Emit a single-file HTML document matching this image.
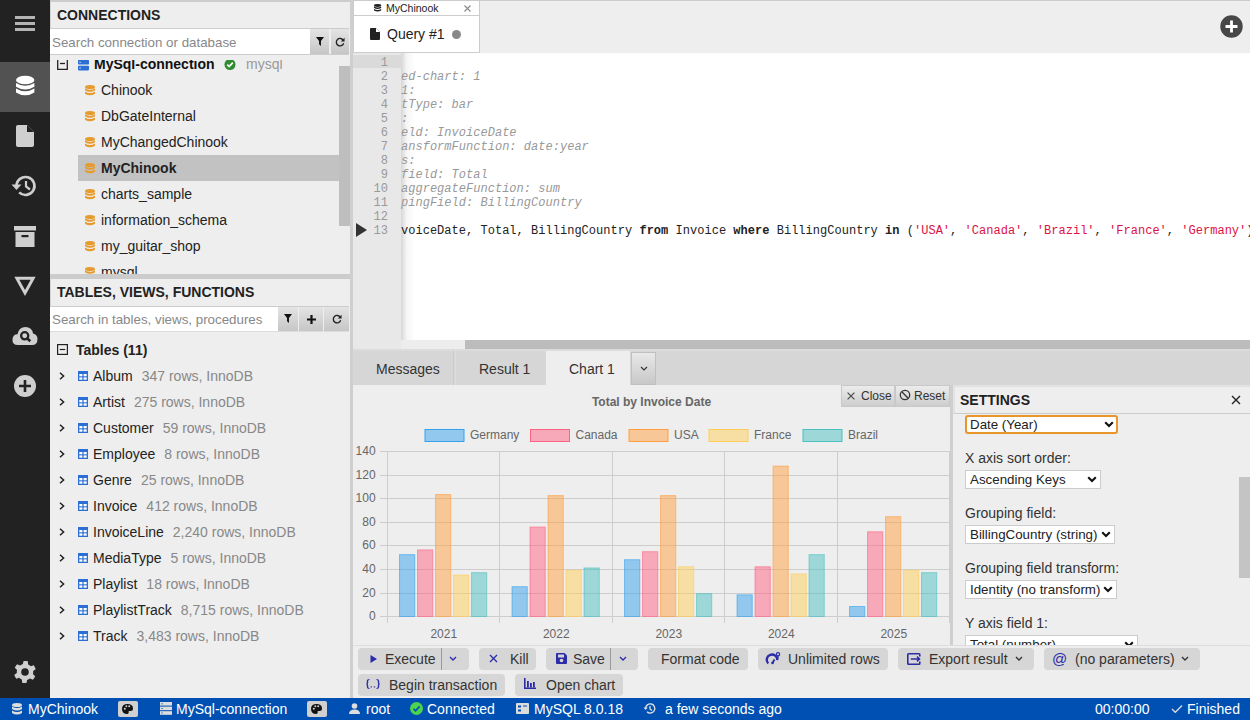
<!DOCTYPE html><html><head><meta charset="utf-8"><style>
*{box-sizing:border-box;margin:0;padding:0}
html,body{width:1250px;height:720px;overflow:hidden;background:#eee;font-family:"Liberation Sans",sans-serif;font-size:14px;color:#222}
.a{position:absolute}
.t{position:absolute;white-space:nowrap;line-height:1}
svg{position:absolute;overflow:visible}
.row{position:absolute;height:26px;line-height:26px;white-space:nowrap;color:#222}
.sub{color:#888;margin-left:9px}
.btn{position:absolute;background:linear-gradient(#e4e4e4,#c6c6c6);}
.tb{position:absolute;height:21px;background:#d6d6d6;border-radius:4px;white-space:nowrap;color:#333}
.tb span{position:absolute;top:3px;line-height:16px}
.lbl{position:absolute;left:12px;font-size:14px;color:#333;line-height:16px;white-space:nowrap}
.sel{position:absolute;left:12px;height:19px;background:#fff;border:1px solid #ccc;font-size:13.333px;color:#222;line-height:17px;padding-left:4px;white-space:nowrap}
.st{position:absolute;top:0;line-height:23px;white-space:nowrap;color:#fff}
.ln{position:absolute;left:0;width:34px;text-align:right;font-family:"Liberation Mono",monospace;font-size:12px;color:#999;height:14px;line-height:14px}
.code{position:absolute;left:48px;font-family:"Liberation Mono",monospace;font-size:12px;letter-spacing:0.023px;height:14px;line-height:14px;white-space:pre;color:#999;font-style:italic}
</style></head><body>
<div class="a" style="left:0;top:0;width:50px;height:698px;background:#222"></div>
<div class="a" style="left:15px;top:16px;width:20px;height:3px;background:#b4b4b4"></div>
<div class="a" style="left:15px;top:22px;width:20px;height:3px;background:#b4b4b4"></div>
<div class="a" style="left:15px;top:28px;width:20px;height:3px;background:#b4b4b4"></div>
<div class="a" style="left:0;top:62px;width:50px;height:50px;background:#525252"></div>
<svg style="left:16px;top:75px" width="18.4" height="21" viewBox="0 0 18.4 21">
<ellipse cx="9.2" cy="5" rx="9.2" ry="4.3" fill="#fff"/>
<path d="M0 7.9 Q9.2 13.5 18.4 7.9 V11.8 Q9.2 17.4 0 11.8Z" fill="#fff"/>
<path d="M0 13.5 Q9.2 19.1 18.4 13.5 V17.4 Q9.2 23.2 0 17.4Z" fill="#fff"/>
</svg>
<svg style="left:16px;top:125px" width="18" height="22" viewBox="0 0 18 22">
<path d="M2 0 H11 L18 7 V20 Q18 22 16 22 H2 Q0 22 0 20 V2 Q0 0 2 0Z" fill="#cfcfcf"/>
<path d="M11 0 L18 7 H11Z" fill="#222"/>
</svg>
<svg style="left:11px;top:175px" width="26" height="22" viewBox="0 0 26 22">
<path d="M5.5 11 A9 9 0 1 1 8.2 17.4" fill="none" stroke="#cfcfcf" stroke-width="2.6"/>
<path d="M0.5 9.5 L5.5 15 L10.5 9.5Z" fill="#cfcfcf"/>
<path d="M15 6 V11.5 L19 14.5" fill="none" stroke="#cfcfcf" stroke-width="2.2"/>
</svg>
<svg style="left:14px;top:226px" width="22" height="21" viewBox="0 0 22 21">
<rect x="0" y="0" width="22" height="4.5" fill="#cfcfcf"/>
<rect x="1.5" y="6" width="19" height="15" fill="#cfcfcf"/>
<rect x="7.5" y="9" width="7" height="2.2" fill="#222"/>
</svg>
<svg style="left:15px;top:277px" width="20" height="18" viewBox="0 0 20 18">
<path d="M1.8 1.3 H18.2 L10 16Z" fill="none" stroke="#cfcfcf" stroke-width="2.9" stroke-linejoin="miter"/>
</svg>
<svg style="left:12px;top:326px" width="26" height="19" viewBox="0 0 26 19">
<path d="M6 19 Q0 19 0.5 13 Q1 8.5 5.5 8.3 Q7 1 13.5 1 Q20 1 21 7.5 Q25.5 8.5 25.5 13 Q25.5 19 20 19Z" fill="#cfcfcf"/>
<circle cx="12.7" cy="9.8" r="3.6" fill="none" stroke="#222" stroke-width="2.3"/>
<path d="M15.3 12.4 L18.3 15.3" stroke="#222" stroke-width="2.6"/>
</svg>
<svg style="left:14px;top:375px" width="22" height="22" viewBox="0 0 22 22">
<circle cx="11" cy="11" r="11" fill="#cfcfcf"/>
<path d="M11 5 V17 M5 11 H17" stroke="#222" stroke-width="2.6"/>
</svg>
<svg style="left:14px;top:661px" width="22" height="22" viewBox="0 0 22 22">
<path d="M11.00 0.00 L12.44 0.09 L13.85 0.37 L14.14 3.42 L15.10 3.90 L15.99 4.49 L16.80 5.20 L19.73 4.30 L20.53 5.50 L21.16 6.79 L21.63 8.15 L19.13 9.93 L19.20 11.00 L19.13 12.07 L18.92 13.12 L21.16 15.21 L20.53 16.50 L19.73 17.70 L18.78 18.78 L15.99 17.51 L15.10 18.10 L14.14 18.58 L13.12 18.92 L12.44 21.91 L11.00 22.00 L9.56 21.91 L8.15 21.63 L7.86 18.58 L6.90 18.10 L6.01 17.51 L5.20 16.80 L2.27 17.70 L1.47 16.50 L0.84 15.21 L0.37 13.85 L2.87 12.07 L2.80 11.00 L2.87 9.93 L3.08 8.88 L0.84 6.79 L1.47 5.50 L2.27 4.30 L3.22 3.22 L6.01 4.49 L6.90 3.90 L7.86 3.42 L8.88 3.08 L9.56 0.09Z" fill="#cfcfcf"/>
<circle cx="11" cy="11" r="3.8" fill="#222"/>
</svg>
<div class="a" style="left:50px;top:0;width:300px;height:698px;background:#eee"></div>
<div class="a" style="left:50px;top:0;width:300px;height:2px;background:#ccc"></div>
<div class="a" style="left:50px;top:2px;width:299px;height:27px;background:#eee;border-left:1px solid #d4d4d4;border-bottom:1px solid #ccc"></div>
<div class="t" style="left:57px;top:8px;font-weight:bold;font-size:14px;color:#222">CONNECTIONS</div>
<div class="a" style="left:50px;top:29px;width:260px;height:25px;background:#fff"></div>
<div class="t" style="left:52px;top:36px;font-size:13.333px;color:#888">Search connection or database</div>
<div class="btn" style="left:310px;top:29px;width:19px;height:25px"></div>
<div class="btn" style="left:331px;top:29px;width:18px;height:25px"></div>
<svg style="left:316px;top:37px" width="8" height="9" viewBox="0 0 10 11"><path d="M0 0 H10 L6.2 5 V11 L3.8 9 V5Z" fill="#111"/></svg>
<svg style="left:335px;top:37px" width="10" height="10" viewBox="0 0 12 12"><path d="M10 4 A4.5 4.5 0 1 0 10.4 7.5" fill="none" stroke="#222" stroke-width="1.6"/><path d="M11.5 1 V5.5 H7Z" fill="#222"/></svg>
<div class="a" style="left:50px;top:54px;width:299px;height:1px;background:#ccc"></div>
<svg style="left:57px;top:60px" width="11" height="10" viewBox="0 0 11 10"><path d="M0.7 0 V9.3 H10.3 V0" fill="none" stroke="#222" stroke-width="1.3"/><path d="M3 3.5 H8" stroke="#222" stroke-width="1.3"/></svg>
<svg style="left:78px;top:60px" width="11" height="11" viewBox="0 0 11 11"><rect x="0" y="0" width="11" height="4.6" rx="0.8" fill="#2b6fd6"/><rect x="0" y="5.8" width="11" height="4.6" rx="0.8" fill="#2b6fd6"/><rect x="1.5" y="1.8" width="1.2" height="1" fill="#fff"/><rect x="1.5" y="7.6" width="1.2" height="1" fill="#fff"/></svg>
<div class="row" style="left:94px;top:51px;font-weight:bold;color:#111">MySql-connection</div>
<svg style="left:224px;top:59px" width="12" height="11" viewBox="0 0 12 11"><circle cx="6" cy="5.5" r="5.5" fill="#2e8b2e"/><path d="M3.2 5.6 L5.2 7.5 L8.8 3.6" fill="none" stroke="#fff" stroke-width="1.7"/></svg>
<div class="row" style="left:246px;top:51px;color:#999">mysql</div>
<div class="a" style="left:50px;top:55px;width:289px;height:5px;background:#eee"></div>
<div class="a" style="left:78px;top:155px;width:262px;height:26px;background:#c2c2c2"></div>
<svg style="left:85px;top:85px" width="10" height="11" viewBox="0 0 10 11"><ellipse cx="5" cy="2" rx="5" ry="2" fill="#e69b2e"/><path d="M0 3.2 Q5 6.2 10 3.2 V5.3 Q5 8.3 0 5.3Z" fill="#e69b2e"/><path d="M0 6.5 Q5 9.5 10 6.5 V8.8 Q5 11.8 0 8.8Z" fill="#e69b2e"/></svg>
<div class="row" style="left:101px;top:77px;">Chinook</div>
<svg style="left:85px;top:111px" width="10" height="11" viewBox="0 0 10 11"><ellipse cx="5" cy="2" rx="5" ry="2" fill="#e69b2e"/><path d="M0 3.2 Q5 6.2 10 3.2 V5.3 Q5 8.3 0 5.3Z" fill="#e69b2e"/><path d="M0 6.5 Q5 9.5 10 6.5 V8.8 Q5 11.8 0 8.8Z" fill="#e69b2e"/></svg>
<div class="row" style="left:101px;top:103px;">DbGateInternal</div>
<svg style="left:85px;top:137px" width="10" height="11" viewBox="0 0 10 11"><ellipse cx="5" cy="2" rx="5" ry="2" fill="#e69b2e"/><path d="M0 3.2 Q5 6.2 10 3.2 V5.3 Q5 8.3 0 5.3Z" fill="#e69b2e"/><path d="M0 6.5 Q5 9.5 10 6.5 V8.8 Q5 11.8 0 8.8Z" fill="#e69b2e"/></svg>
<div class="row" style="left:101px;top:129px;">MyChangedChinook</div>
<svg style="left:85px;top:163px" width="10" height="11" viewBox="0 0 10 11"><ellipse cx="5" cy="2" rx="5" ry="2" fill="#e69b2e"/><path d="M0 3.2 Q5 6.2 10 3.2 V5.3 Q5 8.3 0 5.3Z" fill="#e69b2e"/><path d="M0 6.5 Q5 9.5 10 6.5 V8.8 Q5 11.8 0 8.8Z" fill="#e69b2e"/></svg>
<div class="row" style="left:101px;top:155px;font-weight:bold;">MyChinook</div>
<svg style="left:85px;top:189px" width="10" height="11" viewBox="0 0 10 11"><ellipse cx="5" cy="2" rx="5" ry="2" fill="#e69b2e"/><path d="M0 3.2 Q5 6.2 10 3.2 V5.3 Q5 8.3 0 5.3Z" fill="#e69b2e"/><path d="M0 6.5 Q5 9.5 10 6.5 V8.8 Q5 11.8 0 8.8Z" fill="#e69b2e"/></svg>
<div class="row" style="left:101px;top:181px;">charts_sample</div>
<svg style="left:85px;top:215px" width="10" height="11" viewBox="0 0 10 11"><ellipse cx="5" cy="2" rx="5" ry="2" fill="#e69b2e"/><path d="M0 3.2 Q5 6.2 10 3.2 V5.3 Q5 8.3 0 5.3Z" fill="#e69b2e"/><path d="M0 6.5 Q5 9.5 10 6.5 V8.8 Q5 11.8 0 8.8Z" fill="#e69b2e"/></svg>
<div class="row" style="left:101px;top:207px;">information_schema</div>
<svg style="left:85px;top:241px" width="10" height="11" viewBox="0 0 10 11"><ellipse cx="5" cy="2" rx="5" ry="2" fill="#e69b2e"/><path d="M0 3.2 Q5 6.2 10 3.2 V5.3 Q5 8.3 0 5.3Z" fill="#e69b2e"/><path d="M0 6.5 Q5 9.5 10 6.5 V8.8 Q5 11.8 0 8.8Z" fill="#e69b2e"/></svg>
<div class="row" style="left:101px;top:233px;">my_guitar_shop</div>
<svg style="left:85px;top:267px" width="10" height="11" viewBox="0 0 10 11"><ellipse cx="5" cy="2" rx="5" ry="2" fill="#e69b2e"/><path d="M0 3.2 Q5 6.2 10 3.2 V5.3 Q5 8.3 0 5.3Z" fill="#e69b2e"/><path d="M0 6.5 Q5 9.5 10 6.5 V8.8 Q5 11.8 0 8.8Z" fill="#e69b2e"/></svg>
<div class="row" style="left:101px;top:259px;">mysql</div>
<div class="a" style="left:50px;top:274px;width:300px;height:5px;background:#ccc"></div>
<div class="a" style="left:339px;top:66px;width:11px;height:160px;background:#bebebe"></div>
<div class="a" style="left:50px;top:279px;width:299px;height:28px;background:#eee;border-left:1px solid #d4d4d4;border-bottom:1px solid #ccc"></div>
<div class="t" style="left:57px;top:285px;font-weight:bold;font-size:14px;color:#222">TABLES, VIEWS, FUNCTIONS</div>
<div class="a" style="left:50px;top:307px;width:228px;height:24px;background:#fff"></div>
<div class="t" style="left:52px;top:313px;font-size:13.333px;color:#888">Search in tables, views, procedures</div>
<div class="btn" style="left:278px;top:307px;width:20px;height:24px"></div>
<div class="btn" style="left:299px;top:307px;width:24px;height:24px"></div>
<div class="btn" style="left:324px;top:307px;width:25px;height:24px"></div>
<svg style="left:284px;top:314px" width="8" height="9" viewBox="0 0 10 11"><path d="M0 0 H10 L6.2 5 V11 L3.8 9 V5Z" fill="#111"/></svg>
<svg style="left:307px;top:315px" width="9" height="9" viewBox="0 0 9 9"><path d="M4.5 0 V9 M0 4.5 H9" stroke="#111" stroke-width="2.2"/></svg>
<svg style="left:332px;top:314px" width="10" height="10" viewBox="0 0 12 12"><path d="M10 4 A4.5 4.5 0 1 0 10.4 7.5" fill="none" stroke="#222" stroke-width="1.6"/><path d="M11.5 1 V5.5 H7Z" fill="#222"/></svg>
<div class="a" style="left:50px;top:331px;width:299px;height:1px;background:#ddd"></div>
<svg style="left:57px;top:344px" width="11" height="11" viewBox="0 0 11 11"><rect x="0.6" y="0.6" width="9.8" height="9.8" fill="none" stroke="#222" stroke-width="1.2"/><path d="M2.8 5.5 H8.2" stroke="#222" stroke-width="1.2"/></svg>
<div class="row" style="left:76px;top:337px;font-weight:bold">Tables (11)</div>
<svg style="left:59px;top:372px" width="6" height="8" viewBox="0 0 6 8"><path d="M1 0.8 L4.6 4 L1 7.2" fill="none" stroke="#222" stroke-width="1.5"/></svg>
<svg style="left:78px;top:371px" width="10" height="10" viewBox="0 0 10 10"><rect x="0" y="0" width="10" height="10" fill="#2b6fd6"/><rect x="1.3" y="3" width="3.1" height="2.3" fill="#fff"/><rect x="5.6" y="3" width="3.1" height="2.3" fill="#fff"/><rect x="1.3" y="6.4" width="3.1" height="2.3" fill="#fff"/><rect x="5.6" y="6.4" width="3.1" height="2.3" fill="#fff"/></svg>
<div class="row" style="left:93px;top:363px">Album<span class="sub">347 rows, InnoDB</span></div>
<svg style="left:59px;top:398px" width="6" height="8" viewBox="0 0 6 8"><path d="M1 0.8 L4.6 4 L1 7.2" fill="none" stroke="#222" stroke-width="1.5"/></svg>
<svg style="left:78px;top:397px" width="10" height="10" viewBox="0 0 10 10"><rect x="0" y="0" width="10" height="10" fill="#2b6fd6"/><rect x="1.3" y="3" width="3.1" height="2.3" fill="#fff"/><rect x="5.6" y="3" width="3.1" height="2.3" fill="#fff"/><rect x="1.3" y="6.4" width="3.1" height="2.3" fill="#fff"/><rect x="5.6" y="6.4" width="3.1" height="2.3" fill="#fff"/></svg>
<div class="row" style="left:93px;top:389px">Artist<span class="sub">275 rows, InnoDB</span></div>
<svg style="left:59px;top:424px" width="6" height="8" viewBox="0 0 6 8"><path d="M1 0.8 L4.6 4 L1 7.2" fill="none" stroke="#222" stroke-width="1.5"/></svg>
<svg style="left:78px;top:423px" width="10" height="10" viewBox="0 0 10 10"><rect x="0" y="0" width="10" height="10" fill="#2b6fd6"/><rect x="1.3" y="3" width="3.1" height="2.3" fill="#fff"/><rect x="5.6" y="3" width="3.1" height="2.3" fill="#fff"/><rect x="1.3" y="6.4" width="3.1" height="2.3" fill="#fff"/><rect x="5.6" y="6.4" width="3.1" height="2.3" fill="#fff"/></svg>
<div class="row" style="left:93px;top:415px">Customer<span class="sub">59 rows, InnoDB</span></div>
<svg style="left:59px;top:450px" width="6" height="8" viewBox="0 0 6 8"><path d="M1 0.8 L4.6 4 L1 7.2" fill="none" stroke="#222" stroke-width="1.5"/></svg>
<svg style="left:78px;top:449px" width="10" height="10" viewBox="0 0 10 10"><rect x="0" y="0" width="10" height="10" fill="#2b6fd6"/><rect x="1.3" y="3" width="3.1" height="2.3" fill="#fff"/><rect x="5.6" y="3" width="3.1" height="2.3" fill="#fff"/><rect x="1.3" y="6.4" width="3.1" height="2.3" fill="#fff"/><rect x="5.6" y="6.4" width="3.1" height="2.3" fill="#fff"/></svg>
<div class="row" style="left:93px;top:441px">Employee<span class="sub">8 rows, InnoDB</span></div>
<svg style="left:59px;top:476px" width="6" height="8" viewBox="0 0 6 8"><path d="M1 0.8 L4.6 4 L1 7.2" fill="none" stroke="#222" stroke-width="1.5"/></svg>
<svg style="left:78px;top:475px" width="10" height="10" viewBox="0 0 10 10"><rect x="0" y="0" width="10" height="10" fill="#2b6fd6"/><rect x="1.3" y="3" width="3.1" height="2.3" fill="#fff"/><rect x="5.6" y="3" width="3.1" height="2.3" fill="#fff"/><rect x="1.3" y="6.4" width="3.1" height="2.3" fill="#fff"/><rect x="5.6" y="6.4" width="3.1" height="2.3" fill="#fff"/></svg>
<div class="row" style="left:93px;top:467px">Genre<span class="sub">25 rows, InnoDB</span></div>
<svg style="left:59px;top:502px" width="6" height="8" viewBox="0 0 6 8"><path d="M1 0.8 L4.6 4 L1 7.2" fill="none" stroke="#222" stroke-width="1.5"/></svg>
<svg style="left:78px;top:501px" width="10" height="10" viewBox="0 0 10 10"><rect x="0" y="0" width="10" height="10" fill="#2b6fd6"/><rect x="1.3" y="3" width="3.1" height="2.3" fill="#fff"/><rect x="5.6" y="3" width="3.1" height="2.3" fill="#fff"/><rect x="1.3" y="6.4" width="3.1" height="2.3" fill="#fff"/><rect x="5.6" y="6.4" width="3.1" height="2.3" fill="#fff"/></svg>
<div class="row" style="left:93px;top:493px">Invoice<span class="sub">412 rows, InnoDB</span></div>
<svg style="left:59px;top:528px" width="6" height="8" viewBox="0 0 6 8"><path d="M1 0.8 L4.6 4 L1 7.2" fill="none" stroke="#222" stroke-width="1.5"/></svg>
<svg style="left:78px;top:527px" width="10" height="10" viewBox="0 0 10 10"><rect x="0" y="0" width="10" height="10" fill="#2b6fd6"/><rect x="1.3" y="3" width="3.1" height="2.3" fill="#fff"/><rect x="5.6" y="3" width="3.1" height="2.3" fill="#fff"/><rect x="1.3" y="6.4" width="3.1" height="2.3" fill="#fff"/><rect x="5.6" y="6.4" width="3.1" height="2.3" fill="#fff"/></svg>
<div class="row" style="left:93px;top:519px">InvoiceLine<span class="sub">2,240 rows, InnoDB</span></div>
<svg style="left:59px;top:554px" width="6" height="8" viewBox="0 0 6 8"><path d="M1 0.8 L4.6 4 L1 7.2" fill="none" stroke="#222" stroke-width="1.5"/></svg>
<svg style="left:78px;top:553px" width="10" height="10" viewBox="0 0 10 10"><rect x="0" y="0" width="10" height="10" fill="#2b6fd6"/><rect x="1.3" y="3" width="3.1" height="2.3" fill="#fff"/><rect x="5.6" y="3" width="3.1" height="2.3" fill="#fff"/><rect x="1.3" y="6.4" width="3.1" height="2.3" fill="#fff"/><rect x="5.6" y="6.4" width="3.1" height="2.3" fill="#fff"/></svg>
<div class="row" style="left:93px;top:545px">MediaType<span class="sub">5 rows, InnoDB</span></div>
<svg style="left:59px;top:580px" width="6" height="8" viewBox="0 0 6 8"><path d="M1 0.8 L4.6 4 L1 7.2" fill="none" stroke="#222" stroke-width="1.5"/></svg>
<svg style="left:78px;top:579px" width="10" height="10" viewBox="0 0 10 10"><rect x="0" y="0" width="10" height="10" fill="#2b6fd6"/><rect x="1.3" y="3" width="3.1" height="2.3" fill="#fff"/><rect x="5.6" y="3" width="3.1" height="2.3" fill="#fff"/><rect x="1.3" y="6.4" width="3.1" height="2.3" fill="#fff"/><rect x="5.6" y="6.4" width="3.1" height="2.3" fill="#fff"/></svg>
<div class="row" style="left:93px;top:571px">Playlist<span class="sub">18 rows, InnoDB</span></div>
<svg style="left:59px;top:606px" width="6" height="8" viewBox="0 0 6 8"><path d="M1 0.8 L4.6 4 L1 7.2" fill="none" stroke="#222" stroke-width="1.5"/></svg>
<svg style="left:78px;top:605px" width="10" height="10" viewBox="0 0 10 10"><rect x="0" y="0" width="10" height="10" fill="#2b6fd6"/><rect x="1.3" y="3" width="3.1" height="2.3" fill="#fff"/><rect x="5.6" y="3" width="3.1" height="2.3" fill="#fff"/><rect x="1.3" y="6.4" width="3.1" height="2.3" fill="#fff"/><rect x="5.6" y="6.4" width="3.1" height="2.3" fill="#fff"/></svg>
<div class="row" style="left:93px;top:597px">PlaylistTrack<span class="sub">8,715 rows, InnoDB</span></div>
<svg style="left:59px;top:632px" width="6" height="8" viewBox="0 0 6 8"><path d="M1 0.8 L4.6 4 L1 7.2" fill="none" stroke="#222" stroke-width="1.5"/></svg>
<svg style="left:78px;top:631px" width="10" height="10" viewBox="0 0 10 10"><rect x="0" y="0" width="10" height="10" fill="#2b6fd6"/><rect x="1.3" y="3" width="3.1" height="2.3" fill="#fff"/><rect x="5.6" y="3" width="3.1" height="2.3" fill="#fff"/><rect x="1.3" y="6.4" width="3.1" height="2.3" fill="#fff"/><rect x="5.6" y="6.4" width="3.1" height="2.3" fill="#fff"/></svg>
<div class="row" style="left:93px;top:623px">Track<span class="sub">3,483 rows, InnoDB</span></div>
<div class="a" style="left:350px;top:0;width:3px;height:698px;background:#cfcfcf"></div>
<div class="a" style="left:353px;top:0;width:897px;height:53px;background:#eee"></div>
<div class="a" style="left:353px;top:0;width:897px;height:1px;background:#ccc"></div>
<div class="a" style="left:353px;top:1px;width:127px;height:52px;background:#fff;border-left:1px solid #ccc;border-right:1px solid #ccc;border-bottom:1px solid #ccc"></div>
<div class="a" style="left:353px;top:15px;width:127px;height:1px;background:#ccc"></div>
<svg style="left:373.6px;top:4px" width="7.2" height="8" viewBox="0 0 8 10" preserveAspectRatio="none"><ellipse cx="4" cy="1.8" rx="4" ry="1.8" fill="#222"/><path d="M0 3 Q4 5.6 8 3 V5 Q4 7.6 0 5Z" fill="#222"/><path d="M0 6.2 Q4 8.8 8 6.2 V8.2 Q4 10.8 0 8.2Z" fill="#222"/></svg>
<div class="t" style="left:386px;top:3px;font-size:10.5px;color:#222">MyChinook</div>
<svg style="left:464px;top:5px" width="7" height="7" viewBox="0 0 7 7"><path d="M0.5 0.5 L6.5 6.5 M6.5 0.5 L0.5 6.5" stroke="#888" stroke-width="1.1"/></svg>
<svg style="left:370px;top:28px" width="10" height="12" viewBox="0 0 10 12"><path d="M1 0 H6 L10 4 V11 Q10 12 9 12 H1 Q0 12 0 11 V1 Q0 0 1 0Z" fill="#222"/><path d="M6 0 V4 H10" fill="#fff"/></svg>
<div class="t" style="left:387px;top:27px;font-size:14px;color:#222">Query #1</div>
<div class="a" style="left:452px;top:30px;width:9px;height:9px;border-radius:50%;background:#888"></div>
<svg style="left:1220px;top:15px" width="23" height="23" viewBox="0 0 23 23"><circle cx="11.5" cy="11.5" r="11.2" fill="#474747"/><path d="M11.5 5.5 V17.5 M5.5 11.5 H17.5" stroke="#fff" stroke-width="2.8"/></svg>
<div class="a" style="left:353px;top:53px;width:897px;height:297px;background:#fff"></div>
<div class="a" style="left:353px;top:53px;width:48px;height:296px;background:#e8e8e8"></div>
<div class="a" style="left:353px;top:55px;width:48px;height:13px;background:#dadada"></div>
<div class="a" style="left:401px;top:53px;width:14px;height:287px;background:linear-gradient(90deg,rgba(0,0,0,0.16),rgba(0,0,0,0.04) 40%,rgba(0,0,0,0))"></div>
<div class="ln" style="left:354px;top:56px">1</div>
<div class="ln" style="left:354px;top:70px">2</div>
<div class="ln" style="left:354px;top:84px">3</div>
<div class="ln" style="left:354px;top:98px">4</div>
<div class="ln" style="left:354px;top:112px">5</div>
<div class="ln" style="left:354px;top:126px">6</div>
<div class="ln" style="left:354px;top:140px">7</div>
<div class="ln" style="left:354px;top:154px">8</div>
<div class="ln" style="left:354px;top:168px">9</div>
<div class="ln" style="left:354px;top:182px">10</div>
<div class="ln" style="left:354px;top:196px">11</div>
<div class="ln" style="left:354px;top:210px">12</div>
<div class="ln" style="left:354px;top:224px">13</div>
<div class="code" style="left:401px;top:70px">ed-chart: 1</div>
<div class="code" style="left:401px;top:84px">1:</div>
<div class="code" style="left:401px;top:98px">tType: bar</div>
<div class="code" style="left:401px;top:112px">:</div>
<div class="code" style="left:401px;top:126px">eld: InvoiceDate</div>
<div class="code" style="left:401px;top:140px">ansformFunction: date:year</div>
<div class="code" style="left:401px;top:154px">s:</div>
<div class="code" style="left:401px;top:168px">field: Total</div>
<div class="code" style="left:401px;top:182px">aggregateFunction: sum</div>
<div class="code" style="left:401px;top:196px">pingField: BillingCountry</div>
<div class="code" style="left:401px;top:224px;color:#222;font-style:normal">voiceDate, Total, BillingCountry <b>from</b> Invoice <b>where</b> BillingCountry <b>in</b> (<span style="color:#d14">'USA'</span>, <span style="color:#d14">'Canada'</span>, <span style="color:#d14">'Brazil'</span>, <span style="color:#d14">'France'</span>, <span style="color:#d14">'Germany'</span>)</div>
<svg style="left:356px;top:223px" width="11" height="14" viewBox="0 0 11 14"><path d="M0 0 L11 7 L0 14Z" fill="#333"/></svg>
<div class="a" style="left:401px;top:340px;width:849px;height:9px;background:#ededed"></div>
<div class="a" style="left:465px;top:340px;width:785px;height:9px;background:#bcbcbc"></div>
<div class="a" style="left:353px;top:349px;width:897px;height:2px;background:#dcdcdc"></div>
<div class="a" style="left:353px;top:351px;width:897px;height:34px;background:#d6d6d6"></div>
<div class="a" style="left:453px;top:351px;width:1px;height:34px;background:#cbcbcb"></div><div class="a" style="left:455px;top:351px;width:1px;height:34px;background:#dedede"></div>
<div class="a" style="left:546px;top:351px;width:84px;height:34px;background:#eee"></div>
<div class="t" style="left:376px;top:362px;font-size:14px;color:#333">Messages</div>
<div class="t" style="left:479px;top:362px;font-size:14px;color:#333">Result 1</div>
<div class="t" style="left:569px;top:362px;font-size:14px;color:#333">Chart 1</div>
<div class="a" style="left:631px;top:352px;width:25px;height:33px;background:linear-gradient(#e8e8e8,#c8c8c8);border:1px solid #c0c0c0"></div>
<svg style="left:640px;top:366px" width="8" height="5" viewBox="0 0 8 5"><path d="M1 1 L4 4 L7 1" fill="none" stroke="#333" stroke-width="1.1"/></svg>
<div class="a" style="left:353px;top:385px;width:597px;height:260px;background:#eee"></div>
<div class="btn" style="left:841px;top:385px;width:54px;height:22px;background:linear-gradient(#ececec,#cdcdcd);border:1px solid #c8c8c8"></div>
<div class="btn" style="left:895px;top:385px;width:55px;height:22px;background:linear-gradient(#ececec,#cdcdcd);border:1px solid #c8c8c8"></div>
<svg style="left:847px;top:392px" width="8" height="8" viewBox="0 0 8 8"><path d="M0.6 0.6 L7.4 7.4 M7.4 0.6 L0.6 7.4" stroke="#444" stroke-width="1.1"/></svg>
<div class="t" style="left:861px;top:390px;font-size:12px;color:#333">Close</div>
<svg style="left:899px;top:389px" width="12" height="12" viewBox="0 0 12 12"><circle cx="6" cy="6" r="4.7" fill="none" stroke="#333" stroke-width="1.3"/><path d="M2.8 2.8 L9.2 9.2" stroke="#333" stroke-width="1.3"/></svg>
<div class="t" style="left:914px;top:390px;font-size:12px;color:#333">Reset</div>
<svg style="left:353px;top:385px" width="597" height="260" viewBox="353 385 597 260"><text x="651.5" y="406" font-family="Liberation Sans" font-size="12" font-weight="bold" fill="#666" text-anchor="middle">Total by Invoice Date</text><rect x="425" y="429.5" width="39" height="12" fill="rgba(54,162,235,0.5)" stroke="rgb(54,162,235)" stroke-width="1"/><text x="470" y="439" font-family="Liberation Sans" font-size="12" fill="#666">Germany</text><rect x="530.5" y="429.5" width="39" height="12" fill="rgba(255,99,132,0.5)" stroke="rgb(255,99,132)" stroke-width="1"/><text x="575.5" y="439" font-family="Liberation Sans" font-size="12" fill="#666">Canada</text><rect x="629" y="429.5" width="39" height="12" fill="rgba(255,159,64,0.5)" stroke="rgb(255,159,64)" stroke-width="1"/><text x="674" y="439" font-family="Liberation Sans" font-size="12" fill="#666">USA</text><rect x="709" y="429.5" width="39" height="12" fill="rgba(255,205,86,0.5)" stroke="rgb(255,205,86)" stroke-width="1"/><text x="754" y="439" font-family="Liberation Sans" font-size="12" fill="#666">France</text><rect x="803" y="429.5" width="39" height="12" fill="rgba(75,192,192,0.5)" stroke="rgb(75,192,192)" stroke-width="1"/><text x="848" y="439" font-family="Liberation Sans" font-size="12" fill="#666">Brazil</text><line x1="380" y1="616.5" x2="950" y2="616.5" stroke="#cdcdcd" stroke-width="1"/><text x="375.6" y="620.0" font-family="Liberation Sans" font-size="12" fill="#666" text-anchor="end">0</text><line x1="380" y1="593.5" x2="950" y2="593.5" stroke="#cdcdcd" stroke-width="1"/><text x="375.6" y="597.0" font-family="Liberation Sans" font-size="12" fill="#666" text-anchor="end">20</text><line x1="380" y1="569.5" x2="950" y2="569.5" stroke="#cdcdcd" stroke-width="1"/><text x="375.6" y="573.0" font-family="Liberation Sans" font-size="12" fill="#666" text-anchor="end">40</text><line x1="380" y1="545.5" x2="950" y2="545.5" stroke="#cdcdcd" stroke-width="1"/><text x="375.6" y="549.0" font-family="Liberation Sans" font-size="12" fill="#666" text-anchor="end">60</text><line x1="380" y1="522.5" x2="950" y2="522.5" stroke="#cdcdcd" stroke-width="1"/><text x="375.6" y="526.0" font-family="Liberation Sans" font-size="12" fill="#666" text-anchor="end">80</text><line x1="380" y1="498.5" x2="950" y2="498.5" stroke="#cdcdcd" stroke-width="1"/><text x="375.6" y="502.0" font-family="Liberation Sans" font-size="12" fill="#666" text-anchor="end">100</text><line x1="380" y1="475.5" x2="950" y2="475.5" stroke="#cdcdcd" stroke-width="1"/><text x="375.6" y="479.0" font-family="Liberation Sans" font-size="12" fill="#666" text-anchor="end">120</text><line x1="380" y1="451.5" x2="950" y2="451.5" stroke="#cdcdcd" stroke-width="1"/><text x="375.6" y="455.0" font-family="Liberation Sans" font-size="12" fill="#666" text-anchor="end">140</text><line x1="387.5" y1="451" x2="387.5" y2="623" stroke="#cdcdcd" stroke-width="1"/><line x1="499.5" y1="451" x2="499.5" y2="623" stroke="#cdcdcd" stroke-width="1"/><line x1="612.5" y1="451" x2="612.5" y2="623" stroke="#cdcdcd" stroke-width="1"/><line x1="724.5" y1="451" x2="724.5" y2="623" stroke="#cdcdcd" stroke-width="1"/><line x1="837.5" y1="451" x2="837.5" y2="623" stroke="#cdcdcd" stroke-width="1"/><line x1="949.5" y1="451" x2="949.5" y2="623" stroke="#cdcdcd" stroke-width="1"/><text x="443.75" y="638" font-family="Liberation Sans" font-size="12" fill="#666" text-anchor="middle">2021</text><rect x="399.55" y="554.65" width="15.2" height="61.85" fill="rgba(54,162,235,0.5)" stroke="rgba(54,162,235,0.6)" stroke-width="1"/><rect x="417.55" y="549.94" width="15.2" height="66.56" fill="rgba(255,99,132,0.5)" stroke="rgba(255,99,132,0.6)" stroke-width="1"/><rect x="435.55" y="494.55" width="15.2" height="121.95" fill="rgba(255,159,64,0.5)" stroke="rgba(255,159,64,0.6)" stroke-width="1"/><rect x="453.55" y="575.04" width="15.2" height="41.46" fill="rgba(255,205,86,0.5)" stroke="rgba(255,205,86,0.6)" stroke-width="1"/><rect x="471.55" y="572.69" width="15.2" height="43.81" fill="rgba(75,192,192,0.5)" stroke="rgba(75,192,192,0.6)" stroke-width="1"/><text x="556.25" y="638" font-family="Liberation Sans" font-size="12" fill="#666" text-anchor="middle">2022</text><rect x="512.05" y="586.71" width="15.2" height="29.79" fill="rgba(54,162,235,0.5)" stroke="rgba(54,162,235,0.6)" stroke-width="1"/><rect x="530.05" y="527.08" width="15.2" height="89.42" fill="rgba(255,99,132,0.5)" stroke="rgba(255,99,132,0.6)" stroke-width="1"/><rect x="548.05" y="495.61" width="15.2" height="120.89" fill="rgba(255,159,64,0.5)" stroke="rgba(255,159,64,0.6)" stroke-width="1"/><rect x="566.05" y="570.33" width="15.2" height="46.17" fill="rgba(255,205,86,0.5)" stroke="rgba(255,205,86,0.6)" stroke-width="1"/><rect x="584.05" y="567.97" width="15.2" height="48.53" fill="rgba(75,192,192,0.5)" stroke="rgba(75,192,192,0.6)" stroke-width="1"/><text x="668.75" y="638" font-family="Liberation Sans" font-size="12" fill="#666" text-anchor="middle">2023</text><rect x="624.55" y="559.72" width="15.2" height="56.78" fill="rgba(54,162,235,0.5)" stroke="rgba(54,162,235,0.6)" stroke-width="1"/><rect x="642.55" y="551.71" width="15.2" height="64.79" fill="rgba(255,99,132,0.5)" stroke="rgba(255,99,132,0.6)" stroke-width="1"/><rect x="660.55" y="495.61" width="15.2" height="120.89" fill="rgba(255,159,64,0.5)" stroke="rgba(255,159,64,0.6)" stroke-width="1"/><rect x="678.55" y="566.79" width="15.2" height="49.71" fill="rgba(255,205,86,0.5)" stroke="rgba(255,205,86,0.6)" stroke-width="1"/><rect x="696.55" y="593.66" width="15.2" height="22.84" fill="rgba(75,192,192,0.5)" stroke="rgba(75,192,192,0.6)" stroke-width="1"/><text x="781.25" y="638" font-family="Liberation Sans" font-size="12" fill="#666" text-anchor="middle">2024</text><rect x="737.05" y="594.84" width="15.2" height="21.66" fill="rgba(54,162,235,0.5)" stroke="rgba(54,162,235,0.6)" stroke-width="1"/><rect x="755.05" y="566.79" width="15.2" height="49.71" fill="rgba(255,99,132,0.5)" stroke="rgba(255,99,132,0.6)" stroke-width="1"/><rect x="773.05" y="466.14" width="15.2" height="150.36" fill="rgba(255,159,64,0.5)" stroke="rgba(255,159,64,0.6)" stroke-width="1"/><rect x="791.05" y="573.98" width="15.2" height="42.52" fill="rgba(255,205,86,0.5)" stroke="rgba(255,205,86,0.6)" stroke-width="1"/><rect x="809.05" y="554.65" width="15.2" height="61.85" fill="rgba(75,192,192,0.5)" stroke="rgba(75,192,192,0.6)" stroke-width="1"/><text x="893.75" y="638" font-family="Liberation Sans" font-size="12" fill="#666" text-anchor="middle">2025</text><rect x="849.55" y="606.51" width="15.2" height="9.99" fill="rgba(54,162,235,0.5)" stroke="rgba(54,162,235,0.6)" stroke-width="1"/><rect x="867.55" y="531.79" width="15.2" height="84.71" fill="rgba(255,99,132,0.5)" stroke="rgba(255,99,132,0.6)" stroke-width="1"/><rect x="885.55" y="516.70" width="15.2" height="99.80" fill="rgba(255,159,64,0.5)" stroke="rgba(255,159,64,0.6)" stroke-width="1"/><rect x="903.55" y="570.33" width="15.2" height="46.17" fill="rgba(255,205,86,0.5)" stroke="rgba(255,205,86,0.6)" stroke-width="1"/><rect x="921.55" y="572.69" width="15.2" height="43.81" fill="rgba(75,192,192,0.5)" stroke="rgba(75,192,192,0.6)" stroke-width="1"/></svg>
<div class="a" style="left:950px;top:385px;width:3px;height:260px;background:#cfcfcf"></div>
<div class="a" style="left:953px;top:385px;width:297px;height:260px;background:#eee"></div>
<div class="sel" style="left:965px;top:415px;width:153px;height:19px;border:2px solid #e8952a;border-radius:3px;line-height:15px;padding-left:3px">Date (Year)</div>
<div class="a" style="left:953px;top:385px;width:297px;height:29px;background:#eee;border-top:2px solid #e2e2e2;border-left:2px solid #e2e2e2;border-bottom:1px solid #ccc"></div>
<div class="t" style="left:960px;top:393px;font-weight:bold;font-size:14px;color:#222">SETTINGS</div>
<svg style="left:1231px;top:395px" width="10" height="10" viewBox="0 0 10 10"><path d="M1 1 L9 9 M9 1 L1 9" stroke="#222" stroke-width="1.4"/></svg>
<svg style="left:1104px;top:421px" width="10" height="7" viewBox="0 0 10 7"><path d="M1.2 1.2 L5 5 L8.8 1.2" fill="none" stroke="#111" stroke-width="2.1"/></svg>
<div class="lbl" style="left:965px;top:450px">X axis sort order:</div>
<div class="sel" style="left:965px;top:470px;width:136px">Ascending Keys</div>
<svg style="left:1087px;top:476px" width="10" height="7" viewBox="0 0 10 7"><path d="M1.2 1.2 L5 5 L8.8 1.2" fill="none" stroke="#111" stroke-width="2.1"/></svg>
<div class="lbl" style="left:965px;top:505px">Grouping field:</div>
<div class="sel" style="left:965px;top:525px;width:150px">BillingCountry (string)</div>
<svg style="left:1101px;top:531px" width="10" height="7" viewBox="0 0 10 7"><path d="M1.2 1.2 L5 5 L8.8 1.2" fill="none" stroke="#111" stroke-width="2.1"/></svg>
<div class="lbl" style="left:965px;top:560px">Grouping field transform:</div>
<div class="sel" style="left:965px;top:580px;width:152px">Identity (no transform)</div>
<svg style="left:1103px;top:586px" width="10" height="7" viewBox="0 0 10 7"><path d="M1.2 1.2 L5 5 L8.8 1.2" fill="none" stroke="#111" stroke-width="2.1"/></svg>
<div class="lbl" style="left:965px;top:615px">Y axis field 1:</div>
<div class="sel" style="left:965px;top:635px;width:173px">Total (number)</div>
<svg style="left:1124px;top:641px" width="10" height="7" viewBox="0 0 10 7"><path d="M1.2 1.2 L5 5 L8.8 1.2" fill="none" stroke="#111" stroke-width="2.1"/></svg>
<div class="a" style="left:1239px;top:477px;width:11px;height:101px;background:#c4c4c4"></div>
<div class="a" style="left:353px;top:645px;width:897px;height:53px;background:#eee;border-top:1px solid #ddd"></div>
<div class="tb" style="left:358px;top:648px;width:111px;height:22px"></div>
<div class="tb" style="left:479px;top:648px;width:57px;height:22px"></div>
<div class="tb" style="left:546px;top:648px;width:92px;height:22px"></div>
<div class="tb" style="left:648px;top:648px;width:100px;height:22px"></div>
<div class="tb" style="left:758px;top:648px;width:130px;height:22px"></div>
<div class="tb" style="left:898px;top:648px;width:136px;height:22px"></div>
<div class="tb" style="left:1044px;top:648px;width:156px;height:22px"></div>
<div class="tb" style="left:358px;top:674px;width:147px;height:22px"></div>
<div class="tb" style="left:515px;top:674px;width:108px;height:22px"></div>
<div class="a" style="left:441px;top:648px;width:1px;height:22px;background:#999"></div>
<div class="a" style="left:610px;top:648px;width:1px;height:22px;background:#999"></div>
<div class="t" style="left:385px;top:652px;font-size:14px;color:#333">Execute</div>
<div class="t" style="left:510px;top:652px;font-size:14px;color:#333">Kill</div>
<div class="t" style="left:573px;top:652px;font-size:14px;color:#333">Save</div>
<div class="t" style="left:661px;top:652px;font-size:14px;color:#333">Format code</div>
<div class="t" style="left:788px;top:652px;font-size:14px;color:#333">Unlimited rows</div>
<div class="t" style="left:929px;top:652px;font-size:14px;color:#333">Export result</div>
<div class="t" style="left:1075px;top:652px;font-size:14px;color:#333">(no parameters)</div>
<div class="t" style="left:389px;top:678px;font-size:14px;color:#333">Begin transaction</div>
<div class="t" style="left:546px;top:678px;font-size:14px;color:#333">Open chart</div>
<svg style="left:370px;top:655px" width="7" height="8" viewBox="0 0 7 8"><path d="M0.5 0 L7 4 L0.5 8Z" fill="#2c2ca8"/></svg>
<svg style="left:449px;top:656px" width="8" height="6" viewBox="0 0 8 6"><path d="M1 1 L4 4 L7 1" fill="none" stroke="#2c2ca8" stroke-width="1.4"/></svg>
<svg style="left:619px;top:656px" width="8" height="6" viewBox="0 0 8 6"><path d="M1 1 L4 4 L7 1" fill="none" stroke="#2c2ca8" stroke-width="1.4"/></svg>
<svg style="left:1015px;top:656px" width="8" height="6" viewBox="0 0 8 6"><path d="M1 1 L4 4 L7 1" fill="none" stroke="#333" stroke-width="1.4"/></svg>
<svg style="left:1181px;top:656px" width="8" height="6" viewBox="0 0 8 6"><path d="M1 1 L4 4 L7 1" fill="none" stroke="#333" stroke-width="1.4"/></svg>
<svg style="left:489px;top:654px" width="9" height="9" viewBox="0 0 9 9"><path d="M1 1 L8 8 M8 1 L1 8" stroke="#2c2ca8" stroke-width="1.3"/></svg>
<svg style="left:556px;top:653px" width="11" height="11" viewBox="0 0 11 11"><path d="M0 1 Q0 0 1 0 H8.5 L11 2.5 V10 Q11 11 10 11 H1 Q0 11 0 10Z" fill="#2c2ca8"/><rect x="2" y="1.5" width="6" height="3" fill="#d6d6d6"/><circle cx="5.5" cy="7.5" r="1.8" fill="#d6d6d6"/></svg>
<svg style="left:767px;top:652px" width="13" height="13" viewBox="0 0 13 13"><path d="M1.2 11.5 A5.3 5.3 0 1 1 10.3 8.2" fill="none" stroke="#2c2ca8" stroke-width="2.4"/><path d="M5.5 11 L7.5 7.5" stroke="#2c2ca8" stroke-width="1.8"/><circle cx="5.5" cy="11" r="1.3" fill="#2c2ca8"/><circle cx="11" cy="2.2" r="1.6" fill="none" stroke="#2c2ca8" stroke-width="1.2"/><path d="M11 3.8 V6.5" stroke="#2c2ca8" stroke-width="1.2"/></svg>
<svg style="left:907px;top:653px" width="14" height="12" viewBox="0 0 14 12"><path d="M12.8 3.5 V1.5 Q12.8 0.8 12 0.8 H1.6 Q0.8 0.8 0.8 1.6 V10.4 Q0.8 11.2 1.6 11.2 H12 Q12.8 11.2 12.8 10.4 V8.5" fill="none" stroke="#2c2ca8" stroke-width="1.6"/><path d="M3.8 6 H12.5 M10 3.6 L12.5 6 L10 8.4" fill="none" stroke="#2c2ca8" stroke-width="1.5"/></svg>
<div class="t" style="left:1052px;top:651px;font-size:15px;color:#2c2ca8">@</div>
<svg style="left:366px;top:679px" width="14" height="10" viewBox="0 0 14 13" preserveAspectRatio="none"><path d="M3.5 0.7 Q1.5 0.7 1.5 2.5 V5 Q1.5 6.5 0.3 6.5 Q1.5 6.5 1.5 8 V10.5 Q1.5 12.3 3.5 12.3 M10.5 0.7 Q12.5 0.7 12.5 2.5 V5 Q12.5 6.5 13.7 6.5 Q12.5 6.5 12.5 8 V10.5 Q12.5 12.3 10.5 12.3" fill="none" stroke="#2c2ca8" stroke-width="1.4"/><rect x="4.6" y="9.6" width="1.4" height="1.4" fill="#2c2ca8"/><rect x="7.8" y="9.6" width="1.4" height="1.4" fill="#2c2ca8"/></svg>
<svg style="left:524px;top:678px" width="12" height="11" viewBox="0 0 12 11"><path d="M0.8 0 V10.2 H12" fill="none" stroke="#2c2ca8" stroke-width="1.6"/><rect x="3" y="3" width="1.8" height="6.5" fill="#2c2ca8"/><rect x="6" y="5" width="1.8" height="4.5" fill="#2c2ca8"/><rect x="9" y="4" width="1.8" height="5.5" fill="#2c2ca8"/></svg>
<div class="a" style="left:0;top:698px;width:1250px;height:22px;background:#0050b3"></div>
<div class="a" style="left:0;top:698px;width:1250px;height:23px;font-size:14px">
<div class="st" style="left:28px">MyChinook</div>
<div class="st" style="left:176px">MySql-connection</div>
<div class="st" style="left:366px">root</div>
<div class="st" style="left:427px">Connected</div>
<div class="st" style="left:534px">MySQL 8.0.18</div>
<div class="st" style="left:665px">a few seconds ago</div>
<div class="st" style="left:1095px">00:00:00</div>
<div class="st" style="left:1187px">Finished</div>
</div>
<svg style="left:12px;top:703px" width="10" height="12" viewBox="0 0 10 12"><ellipse cx="5" cy="2" rx="5" ry="2" fill="#ddd"/><path d="M0 3.4 Q5 6.4 10 3.4 V6 Q5 9 0 6Z" fill="#ddd"/><path d="M0 7.4 Q5 10.4 10 7.4 V10 Q5 13 0 10Z" fill="#ddd"/></svg>
<div class="a" style="left:118px;top:701px;width:20px;height:16px;background:#d0d0d0;border-radius:2px"></div><svg style="left:122px;top:704px" width="11" height="10" viewBox="0 0 11 10"><path d="M5.5 0 Q11 0 11 4.5 Q11 7 8.5 7 H7.3 Q6.3 7 6.6 8 Q7 9 6.2 9.6 Q5.8 10 5.5 10 Q0 10 0 5 Q0 0 5.5 0Z" fill="#111"/><circle cx="2.8" cy="4.8" r="1" fill="#d0d0d0"/><circle cx="4.3" cy="2.3" r="1" fill="#d0d0d0"/><circle cx="7.2" cy="2.3" r="1" fill="#d0d0d0"/></svg>
<div class="a" style="left:307px;top:701px;width:20px;height:16px;background:#d0d0d0;border-radius:2px"></div><svg style="left:311px;top:704px" width="11" height="10" viewBox="0 0 11 10"><path d="M5.5 0 Q11 0 11 4.5 Q11 7 8.5 7 H7.3 Q6.3 7 6.6 8 Q7 9 6.2 9.6 Q5.8 10 5.5 10 Q0 10 0 5 Q0 0 5.5 0Z" fill="#111"/><circle cx="2.8" cy="4.8" r="1" fill="#d0d0d0"/><circle cx="4.3" cy="2.3" r="1" fill="#d0d0d0"/><circle cx="7.2" cy="2.3" r="1" fill="#d0d0d0"/></svg>
<svg style="left:160px;top:702px" width="12" height="13" viewBox="0 0 12 13"><rect x="0" y="0" width="12" height="3.6" fill="#ddd"/><rect x="0" y="4.6" width="12" height="3.6" fill="#ddd"/><rect x="0" y="9.2" width="12" height="3.6" fill="#ddd"/><rect x="1.5" y="1.3" width="1.2" height="1" fill="#0050b3"/><rect x="1.5" y="5.9" width="1.2" height="1" fill="#0050b3"/><rect x="1.5" y="10.5" width="1.2" height="1" fill="#0050b3"/></svg>
<svg style="left:349px;top:703px" width="11" height="11" viewBox="0 0 11 11"><circle cx="5.5" cy="3" r="2.8" fill="#ddd"/><path d="M0 11 Q0 6.5 5.5 6.5 Q11 6.5 11 11Z" fill="#ddd"/></svg>
<svg style="left:410px;top:702px" width="13" height="13" viewBox="0 0 13 13"><circle cx="6.5" cy="6.5" r="6.5" fill="#4cd44c"/><path d="M3.5 6.7 L5.6 8.8 L9.6 4.4" fill="none" stroke="#0050b3" stroke-width="1.6"/></svg>
<svg style="left:516px;top:703px" width="13" height="11" viewBox="0 0 13 11"><rect x="0" y="0" width="13" height="11" rx="1" fill="#ddd"/><rect x="2" y="2.5" width="3" height="2" fill="#0050b3"/><rect x="2" y="6.5" width="3" height="2" fill="#0050b3"/><rect x="7" y="2.5" width="4" height="1" fill="#0050b3"/></svg>
<svg style="left:643px;top:702px" width="13" height="13" viewBox="0 0 13 13"><path d="M2.6 6.5 A4.6 4.6 0 1 1 4 9.8" fill="none" stroke="#ddd" stroke-width="1.4"/><path d="M0.5 5.5 L2.6 8 L4.8 5.5Z" fill="#ddd"/><path d="M7 4 V7 L9 8.5" fill="none" stroke="#ddd" stroke-width="1.3"/></svg>
<svg style="left:1171px;top:704px" width="12" height="10" viewBox="0 0 12 10"><path d="M1 5 L4.3 8.3 L11 1.5" fill="none" stroke="#ddd" stroke-width="1.3"/></svg>
</body></html>
